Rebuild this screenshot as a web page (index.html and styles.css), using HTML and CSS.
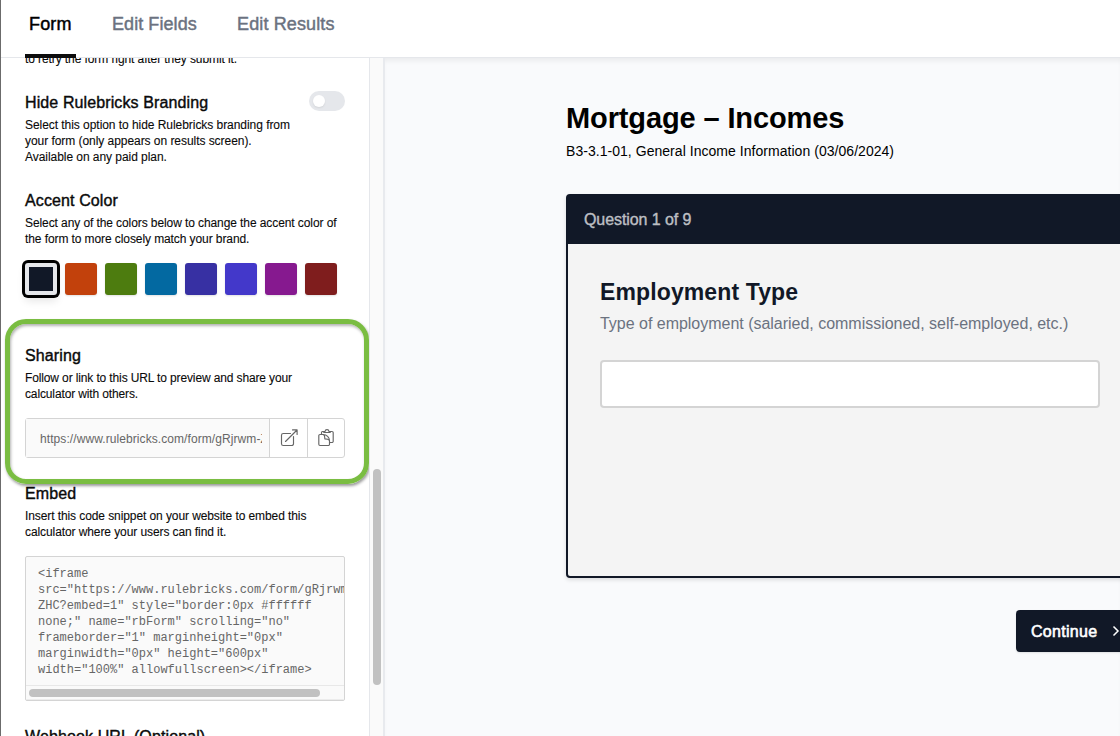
FILE: index.html
```html
<!DOCTYPE html>
<html lang="en">
<head>
<meta charset="utf-8">
<title>Form</title>
<link rel="stylesheet" href="styles.css">
</head>
<body>
<div class="app">
  <nav class="tabs">
    <a class="tab tab-active"><span class="t-form">Form</span></a>
    <a class="tab t-fields">Edit Fields</a>
    <a class="tab t-results">Edit Results</a>
  </nav>
  <div class="workspace">
    <aside class="sidebar">
      <p class="desc retry">to retry the form right after they submit it.</p>
      <section class="setting branding">
        <div>
          <h3 class="h-brand">Hide Rulebricks Branding</h3>
          <p class="desc">Select this option to hide Rulebricks branding from<br>your form (only appears on results screen).<br>Available on any paid plan.</p>
        </div>
        <span class="toggle"><span class="knob"></span></span>
      </section>
      <section class="setting accent">
        <h3>Accent Color</h3>
        <p class="desc">Select any of the colors below to change the accent color of<br>the form to more closely match your brand.</p>
        <div class="swatches">
          <span class="swatch navy selected"></span>
          <span class="swatch orange"></span>
          <span class="swatch green"></span>
          <span class="swatch blue"></span>
          <span class="swatch indigo"></span>
          <span class="swatch violet"></span>
          <span class="swatch purple"></span>
          <span class="swatch red"></span>
        </div>
      </section>
      <section class="setting sharing">
        <h3>Sharing</h3>
        <p class="desc">Follow or link to this URL to preview and share your<br>calculator with others.</p>
        <div class="share">
          <div class="url"><span class="url-text">https://www.rulebricks.com/form/gRjrwm-ZHC</span></div>
          <span class="share-btn open"><svg width="20" height="20" viewBox="0 0 20 20"><path d="M11.5 5.500H4.300A1.800 1.800 0 0 0 2.500 7.300V15.700A1.800 1.800 0 0 0 4.300 17.500H12.700A1.800 1.800 0 0 0 14.500 15.700V8.500M6.500 13.500L18 2M13.500 1.900H18.100V6.500"/></svg></span>
          <span class="share-btn copy"><svg width="20" height="20" viewBox="0 0 20 20"><path d="M7.500 3.500H6.500A1.200 1.200 0 0 0 5.500 4.700V6.500M14.500 3.500H16A1.200 1.200 0 0 1 17.200 4.700V13.300A1.200 1.200 0 0 1 16 14.500H13.500M7.800 4.500V3.500H9C9.300 1 12.700 1 13 3.500H14.200V4.500ZM4 6.500H7.500C10.500 6.500 13.500 9.500 13.500 12.500V16.300A1.200 1.200 0 0 1 12.300 17.500H4A1.200 1.200 0 0 1 2.800 16.300V7.700A1.200 1.200 0 0 1 4 6.500ZM7.500 6.500C9 7.500 8.800 9 8.800 10.800C10.800 10.800 12.500 11 13.500 12.500"/></svg></span>
        </div>
      </section>
      <section class="setting embed">
        <h3>Embed</h3>
        <p class="desc">Insert this code snippet on your website to embed this<br>calculator where your users can find it.</p>
        <div class="code">
          <pre>&lt;iframe
src="https://www.rulebricks.com/form/gRjrwm-
ZHC?embed=1" style="border:0px #ffffff
none;" name="rbForm" scrolling="no"
frameborder="1" marginheight="0px"
marginwidth="0px" height="600px"
width="100%" allowfullscreen&gt;&lt;/iframe&gt;</pre>
          <div class="hbar"><span class="hthumb"></span></div>
        </div>
      </section>
      <section class="setting"><h3 class="h-hook">Webhook URL (Optional)</h3></section>
      <div class="highlight"></div>
    </aside>
    <div class="vbar"><span class="vthumb"></span></div>
    <main class="preview">
      <h1>Mortgage – Incomes</h1>
      <p class="subtitle">B3-3.1-01, General Income Information (03/06/2024)</p>
      <div class="card">
        <div class="card-head">Question 1 of 9</div>
        <div class="card-body">
          <h2>Employment Type</h2>
          <p class="hint">Type of employment (salaried, commissioned, self-employed, etc.)</p>
          <div class="answer"></div>
        </div>
      </div>
      <div class="actions">
        <span class="continue"><span class="c-label">Continue</span><svg width="20" height="20" viewBox="0 0 20 20"><path d="M6.500 5.500L11 10L6.500 14.500"/></svg></span>
      </div>
    </main>
  </div>
</div>
</body>
</html>
```
FILE: styles.css
```css
* { box-sizing: border-box; }
body { margin: 0; font-family: "Liberation Sans", Arial, sans-serif; color: #0a0a0a; background: #fff; overflow: hidden; }
h1, h2, h3, p, pre { margin: 0; }
.app { width: 1120px; height: 736px; border-left: 1px solid #6b6b6b; display: flex; flex-direction: column; overflow: hidden; }
.tabs { height: 58px; flex: none; border-bottom: 1px solid #e5e7eb; display: flex; padding-left: 24px; gap: 36px; font-size: 18px; line-height: 28px; }
.tab { color: #6b7280; -webkit-text-stroke: 0.45px currentColor; height: 58px; padding-top: 10px; white-space: nowrap; }
.tab-active { color: #000; border-bottom: 4px solid #0c0c0c; width: 51px; padding-left: 4px; letter-spacing: 0.15px; }
.t-fields { width: 85px; letter-spacing: 0.07px; }
.t-results { margin-left: 4px; letter-spacing: 0.13px; }
.workspace { flex: 1; min-height: 0; display: flex; }
.sidebar { position: relative; width: 368px; flex: none; padding-left: 24px; overflow: hidden; height: 678px; }
.desc { font-size: 12px; line-height: 16px; letter-spacing: -0.09px; white-space: nowrap; -webkit-text-stroke: 0.1px currentColor; }
.retry { margin-top: -7px; margin-bottom: 23px; }
h3 { font-size: 16px; line-height: 24px; font-weight: 400; letter-spacing: 0.11px; -webkit-text-stroke: 0.4px currentColor; padding-top: 1px; margin-bottom: 2px; white-space: nowrap; }
.branding { display: flex; justify-content: space-between; padding-right: 24px; margin-bottom: 23px; }
.branding .desc { letter-spacing: -0.05px; }
.toggle { width: 36px; height: 20px; border-radius: 10px; background: #e5e7eb; padding: 4px; margin-top: 1px; flex: none; }
.knob { display: block; width: 12px; height: 12px; border-radius: 50%; background: #fff; box-shadow: 0 1px 2px rgba(0,0,0,.08); }
.swatches { display: flex; gap: 8px; margin: 16px 0 48px; }
.swatch { width: 32px; height: 32px; border-radius: 3px; box-shadow: 0 1px 2px rgba(0,0,0,.12); }
.selected { border: 4px solid #e5e7eb; box-shadow: 0 0 0 3px #000, 0 6px 8px rgba(0,0,0,.1); }
.navy { background: #111827; }
.orange { background: #c2410c; }
.green { background: #4d7c0f; }
.blue { background: #0369a1; }
.indigo { background: #3730a3; }
.violet { background: #4338ca; }
.purple { background: #86198f; }
.red { background: #7f1d1d; }
.sharing .desc { letter-spacing: -0.13px; }
.share { display: flex; width: 320px; height: 40px; margin: 16px 0 23px; border: 1px solid #d4d4d4; border-radius: 3px; }
.url { flex: 0 0 243px; background: #fafafa; padding: 0 6px 0 14px; }
.url-text { display: block; overflow: hidden; white-space: nowrap; font-size: 12px; line-height: 40px; letter-spacing: 0.08px; color: #666; width: 222px; }
.share-btn { border-left: 1px solid #d4d4d4; display: flex; align-items: center; justify-content: center; }
.open { width: 38px; }
.copy { width: 37px; }
.share-btn svg { fill: none; stroke: #666; stroke-width: 1.15; stroke-linejoin: round; stroke-linecap: round; }
.code { width: 320px; height: 145px; margin: 16px 0 23px; border: 1px solid #d4d4d4; border-radius: 2px; background: #fafafa; overflow: hidden; }
pre { font: 12px/16px "Liberation Mono", monospace; color: #666; height: 128px; padding: 9px 0 0 12px; }
.hbar { height: 15px; border-top: 1px solid #e8e8e8; border-bottom: 1px solid #ececec; padding: 3px; }
.hthumb { display: block; width: 291px; height: 8px; border-radius: 4px; background: #c1c1c1; }
.highlight { position: absolute; left: 4px; top: 261px; width: 364px; height: 165px; border: 5px solid #7abd42; border-radius: 21px; box-shadow: 1px 2px 3px rgba(0,0,0,.4), inset 1px 2px 3px rgba(0,0,0,.3); }
.vbar { width: 16px; flex: none; background: #fafafa; border-left: 1px solid #e5e7eb; border-right: 2px solid #e8eaee; padding: 411px 0 0 3px; }
.vthumb { display: block; width: 8px; height: 216px; border-radius: 4px; background: #c1c1c1; }
.preview { flex: 1; min-width: 0; background: #f9fafc; padding: 42px 0 0 181px; box-shadow: inset 0 5px 5px -2px rgba(0,0,0,.06); overflow: hidden; white-space: nowrap; }
h1 { font-size: 29px; line-height: 36px; letter-spacing: -0.12px; color: #000; }
.subtitle { font-size: 14px; line-height: 20px; margin-top: 5px; letter-spacing: 0.04px; color: #000; }
.card { width: 568px; height: 384px; margin-top: 33px; background: #f4f4f4; border: 2px solid #111827; border-radius: 4px; box-shadow: 0 2px 4px rgba(0,0,0,.12); }
.card-head { height: 48px; background: #111827; color: #bdbfc3; font-size: 16px; letter-spacing: -0.08px; line-height: 47px; padding-left: 16px; -webkit-text-stroke: 0.4px currentColor; }
.card-body { padding: 32px 32px; }
h2 { font-size: 23px; line-height: 32px; letter-spacing: 0.12px; color: #111827; }
.hint { font-size: 16px; line-height: 24px; color: #6b7280; letter-spacing: -0.02px; margin-top: 4px; }
.answer { width: 500px; height: 48px; margin-top: 24px; background: #fff; border: 2px solid #d4d4d4; border-radius: 4px; }
.actions { width: 568px; display: flex; justify-content: flex-end; margin-top: 32px; }
.continue { width: 118px; height: 42px; background: #111827; border-radius: 4px; color: #fff; display: flex; align-items: center; padding-left: 15px; font-size: 16px; letter-spacing: 0.3px; box-shadow: 0 1px 2px rgba(0,0,0,.1); }
.c-label { width: 76px; padding-top: 1px; -webkit-text-stroke: 0.6px currentColor; }
.continue svg { fill: none; stroke: #fff; stroke-width: 1.5; flex: none; }
```
